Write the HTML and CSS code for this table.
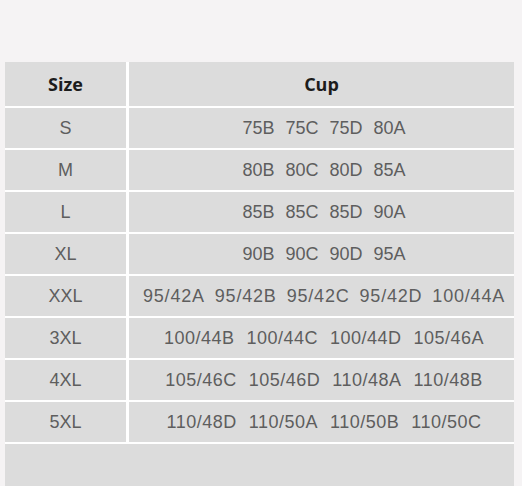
FILE: index.html
```html
<!DOCTYPE html>
<html>
<head>
<meta charset="utf-8">
<link rel="stylesheet" href="styles.css">
</head>
<body>
<div class="page">
  <div class="table">
    <div class="cell head">Size</div>
    <div class="cell head">Cup</div>

    <div class="cell size">S</div>
    <div class="cell cups short"><span>75B</span><span>75C</span><span>75D</span><span>80A</span></div>

    <div class="cell size">M</div>
    <div class="cell cups short"><span>80B</span><span>80C</span><span>80D</span><span>85A</span></div>

    <div class="cell size">L</div>
    <div class="cell cups short"><span>85B</span><span>85C</span><span>85D</span><span>90A</span></div>

    <div class="cell size">XL</div>
    <div class="cell cups short"><span>90B</span><span>90C</span><span>90D</span><span>95A</span></div>

    <div class="cell size">XXL</div>
    <div class="cell cups five"><span>95/42A</span><span>95/42B</span><span>95/42C</span><span>95/42D</span><span>100/44A</span></div>

    <div class="cell size">3XL</div>
    <div class="cell cups four"><span>100/44B</span><span>100/44C</span><span>100/44D</span><span>105/46A</span></div>

    <div class="cell size">4XL</div>
    <div class="cell cups four"><span>105/46C</span><span>105/46D</span><span>110/48A</span><span>110/48B</span></div>

    <div class="cell size">5XL</div>
    <div class="cell cups four"><span>110/48D</span><span>110/50A</span><span>110/50B</span><span>110/50C</span></div>

    <div class="cell empty"></div>
  </div>
</div>
</body>
</html>
```

FILE: styles.css
```css
html, body {
  margin: 0;
  padding: 0;
  background: #f5f3f4;
  overflow: hidden;
}

.page {
  width: 522px;
  height: 486px;
  padding-top: 62px;
  padding-left: 5px;
  box-sizing: border-box;
}

.table {
  width: 509px;
  display: grid;
  grid-template-columns: 121px 385px;
  grid-auto-rows: 40px;
  grid-template-rows: 44px;
  column-gap: 3px;
  row-gap: 2px;
  background: #ffffff;
}

.cell {
  background: #dcdcdc;
  display: flex;
  align-items: center;
  justify-content: center;
  font-family: "Liberation Sans", Arial, sans-serif;
  font-size: 18px;
  color: #5e5e5e;
}

.head {
  font-family: "Open Sans", "Liberation Sans", sans-serif;
  font-weight: 700;
  font-size: 18px;
  color: #1c1c1c;
}

.cups {
  padding-left: 5px;
}

.short { gap: 11px; }

.five {
  gap: 10px;
  letter-spacing: 0.8px;
}

.four {
  gap: 12px;
  letter-spacing: 0.5px;
}

.empty {
  grid-column: 1 / 3;
  height: 50px;
}
```
